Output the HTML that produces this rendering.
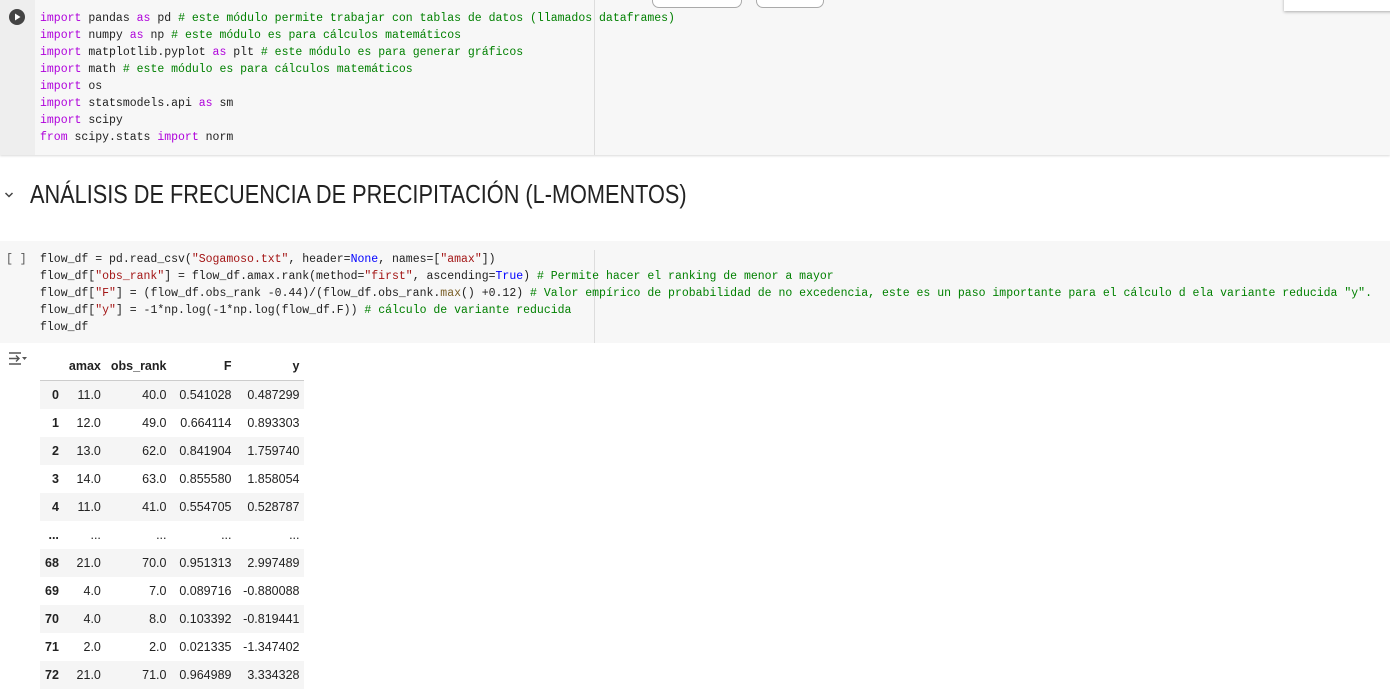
<!DOCTYPE html>
<html><head><meta charset="utf-8"><style>
body{margin:0;width:1390px;height:685px;overflow:hidden;background:#fff;font-family:"Liberation Sans",sans-serif;position:relative}
.cell{position:absolute;left:0;width:1390px;background:#f7f7f7}
.code{position:absolute;left:40px;font-family:"Liberation Mono",monospace;font-size:11.5px;line-height:17px;color:#212121;white-space:pre}
.k{color:#af00db}.c{color:#008000}.s{color:#a31515}.b{color:#0000ff}.f{color:#795e26}
.vl{position:absolute;left:594px;width:1px;background:#ddd}
table{position:absolute;left:40px;top:352px;border-collapse:collapse;font-size:12.5px;color:#222}
td,th{height:28px;padding:0 5px;text-align:right}
th{font-weight:bold}
thead th{height:28px;border-bottom:1px solid #ccc}
tbody tr:nth-child(odd){background:#f5f5f5}
</style></head><body>
<div class="cell" style="top:0;height:155px;box-shadow:0 1px 2px rgba(0,0,0,.15)"></div>
<div style="position:absolute;left:0;top:0;width:35px;height:155px;background:#eeeeee"></div>
<div class="vl" style="top:0;height:155px"></div>
<svg style="position:absolute;left:9px;top:9px" width="16" height="16"><circle cx="8" cy="8" r="8" fill="#444"/><path d="M6 4.5L11.5 8L6 11.5Z" fill="#fff"/></svg>
<div style="position:absolute;left:652px;top:-10px;width:88px;height:16px;border:1px solid #aaa;border-radius:7px;background:#fff"></div>
<div style="position:absolute;left:756px;top:-10px;width:66px;height:16px;border:1px solid #aaa;border-radius:7px;background:#fff"></div>
<div style="position:absolute;left:1284px;top:-5px;width:110px;height:16px;background:#fff;box-shadow:0 1px 3px rgba(0,0,0,.3)"></div>
<div class="code" style="top:10px"><span class="k">import</span> pandas <span class="k">as</span> pd <span class="c"># este módulo permite trabajar con tablas de datos (llamados dataframes)</span>
<span class="k">import</span> numpy <span class="k">as</span> np <span class="c"># este módulo es para cálculos matemáticos</span>
<span class="k">import</span> matplotlib.pyplot <span class="k">as</span> plt <span class="c"># este módulo es para generar gráficos</span>
<span class="k">import</span> math <span class="c"># este módulo es para cálculos matemáticos</span>
<span class="k">import</span> os
<span class="k">import</span> statsmodels.api <span class="k">as</span> sm
<span class="k">import</span> scipy
<span class="k">from</span> scipy.stats <span class="k">import</span> norm</div>
<svg style="position:absolute;left:4px;top:191px" width="10" height="8"><path d="M1.5 2L5 5.5L8.5 2" stroke="#444" stroke-width="1.5" fill="none"/></svg>
<div style="position:absolute;left:30px;top:179px;font-size:26px;color:#222;white-space:nowrap;transform:scaleX(0.835);transform-origin:left top">ANÁLISIS DE FRECUENCIA DE PRECIPITACIÓN (L-MOMENTOS)</div>
<div class="cell" style="top:241px;height:102px"></div>
<div class="vl" style="top:250px;height:93px"></div>
<div class="code" style="left:6px;top:251px;color:#555">[ ]</div>
<div class="code" style="top:251px">flow_df = pd.read_csv(<span class="s">"Sogamoso.txt"</span>, header=<span class="b">None</span>, names=[<span class="s">"amax"</span>])
flow_df[<span class="s">"obs_rank"</span>] = flow_df.amax.rank(method=<span class="s">"first"</span>, ascending=<span class="b">True</span>) <span class="c"># Permite hacer el ranking de menor a mayor</span>
flow_df[<span class="s">"F"</span>] = (flow_df.obs_rank -0.44)/(flow_df.obs_rank.<span class="f">max</span>() +0.12) <span class="c"># Valor empírico de probabilidad de no excedencia, este es un paso importante para el cálculo d ela variante reducida "y".</span>
flow_df[<span class="s">"y"</span>] = -1*np.log(-1*np.log(flow_df.F)) <span class="c"># cálculo de variante reducida</span>
flow_df</div>
<svg style="position:absolute;left:8px;top:351px" width="20" height="16"><path d="M1 2H13M1 13H13M1 7.5H11M8 4.5L11 7.5L8 10.5" stroke="#555" stroke-width="1.4" fill="none"/><path d="M14 6H19L16.5 9Z" fill="#555"/></svg>
<table>
<thead><tr><th style="width:10px"></th><th>amax</th><th>obs_rank</th><th style="width:55px">F</th><th style="width:58px">y</th></tr></thead>
<tbody>
<tr><th>0</th><td>11.0</td><td>40.0</td><td>0.541028</td><td>0.487299</td></tr>
<tr><th>1</th><td>12.0</td><td>49.0</td><td>0.664114</td><td>0.893303</td></tr>
<tr><th>2</th><td>13.0</td><td>62.0</td><td>0.841904</td><td>1.759740</td></tr>
<tr><th>3</th><td>14.0</td><td>63.0</td><td>0.855580</td><td>1.858054</td></tr>
<tr><th>4</th><td>11.0</td><td>41.0</td><td>0.554705</td><td>0.528787</td></tr>
<tr style="background:#fff"><th>...</th><td>...</td><td>...</td><td>...</td><td>...</td></tr>
<tr style="background:#f5f5f5"><th>68</th><td>21.0</td><td>70.0</td><td>0.951313</td><td>2.997489</td></tr>
<tr style="background:#fff"><th>69</th><td>4.0</td><td>7.0</td><td>0.089716</td><td>-0.880088</td></tr>
<tr style="background:#f5f5f5"><th>70</th><td>4.0</td><td>8.0</td><td>0.103392</td><td>-0.819441</td></tr>
<tr style="background:#fff"><th>71</th><td>2.0</td><td>2.0</td><td>0.021335</td><td>-1.347402</td></tr>
<tr style="background:#f5f5f5"><th>72</th><td>21.0</td><td>71.0</td><td>0.964989</td><td>3.334328</td></tr>
</tbody></table>
</body></html>
